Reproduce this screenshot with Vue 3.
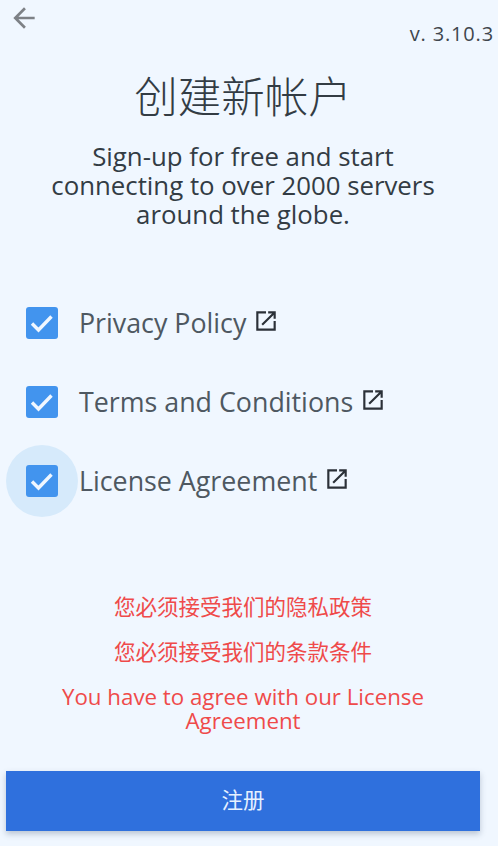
<template>
  <div class="signup">
    <div class="top-bar">
      <button class="back" aria-label="Back">
        <svg width="32" height="32" viewBox="0 0 24 24"><path d="M20 11H7.83l5.59-5.59L12 4l-8 8 8 8 1.41-1.41L7.83 13H20z" /></svg>
      </button>
      <span class="version">v. 3.10.3</span>
    </div>

    <h1 class="title">创建新帐户</h1>
    <p class="subtitle">
      <span>Sign-up for free and start</span>
      <span>connecting to over 2000 servers</span>
      <span>around the globe.</span>
    </p>

    <div class="checks">
      <label v-for="item in items" :key="item.label" class="check-row">
        <span class="box-wrap" :class="{ focused: item.focused }">
          <span class="box">
            <svg width="32" height="32" viewBox="0 0 32 32"><path d="M6 16.5l6.5 6.5 13-13.5" /></svg>
          </span>
        </span>
        <span class="check-label">{{ item.label }}</span>
        <svg class="ext" width="26" height="26" viewBox="0 0 24 24"><path d="M19 19H5V5h7V3H3v18h18v-9h-2v7zM14 3v2h3.59l-9.83 9.83 1.41 1.41L19 6.41V10h2V3h-7z" /></svg>
      </label>
    </div>

    <div class="errors">
      <p v-for="err in errors" :key="err.text" :class="{ latin: err.latin }">{{ err.text }}</p>
    </div>

    <button class="submit">注册</button>
  </div>
</template>

<script setup>
const items = [
  { label: 'Privacy Policy' },
  { label: 'Terms and Conditions' },
  { label: 'License Agreement', focused: true }
]

const errors = [
  { text: '您必须接受我们的隐私政策' },
  { text: '您必须接受我们的条款条件' },
  { text: 'You have to agree with our License Agreement', latin: true }
]
</script>

<style>
html, body {
  margin: 0;
  background: #f0f7ff;
}
</style>

<style scoped>
.signup {
  box-sizing: border-box;
  height: 846px;
  width: 498px;
  display: flex;
  flex-direction: column;
  padding: 0 18px 15px 6px;
  background: #f0f7ff;
  font-family: "Open Sans", "Noto Sans CJK SC", sans-serif;
  color: #3c4650;
  overflow: hidden;
}

.top-bar {
  display: flex;
  justify-content: space-between;
  height: 54px;
  margin-right: -14px;
}

.back {
  width: 38px;
  height: 36px;
  padding: 2px 0 0 2px;
  border: 0;
  background: none;
  text-align: left;
}

.back svg path {
  fill: #7d8186;
}

.version {
  margin-top: 21px;
  font-size: 20px;
  line-height: 26px;
  letter-spacing: 0.85px;
  color: #3f464d;
}

.title {
  margin: 15px 0 0;
  font-size: 43.5px;
  line-height: 56px;
  font-weight: 300;
  text-align: center;
  color: #333c44;
}

.subtitle {
  margin: 17px 0 0;
  display: flex;
  flex-direction: column;
  font-size: 25.8px;
  line-height: 29px;
  text-align: center;
  color: #333c44;
}

.checks {
  margin-top: 58px;
  display: flex;
  flex-direction: column;
  gap: 7px;
  padding-left: 20px;
}

.check-row {
  display: flex;
  align-items: center;
  height: 72px;
}

.box-wrap {
  position: relative;
  display: block;
  width: 32px;
  height: 32px;
  margin-right: 21px;
}

.box-wrap.focused::before {
  content: "";
  position: absolute;
  left: -20px;
  top: -20px;
  width: 72px;
  height: 72px;
  border-radius: 50%;
  background: #d6eafb;
}

.box {
  position: relative;
  display: block;
  width: 32px;
  height: 32px;
  border-radius: 3px;
  background: #4294ee;
}

.box svg {
  display: block;
}

.box svg path {
  fill: none;
  stroke: #f0f7ff;
  stroke-width: 3.4;
}

.check-label {
  font-size: 26.8px;
  line-height: 34px;
  color: #4e5861;
}

.ext {
  margin: -4px 0 0 7px;
}

.ext path {
  fill: #2b3138;
}

.errors {
  margin-top: 78px;
  text-align: center;
  color: #ef4a4a;
  font-size: 21.5px;
  line-height: 24px;
}

.errors p {
  margin: 0 10px 21px;
}

.errors p.latin {
  font-size: 22.3px;
}

.submit {
  margin-top: auto;
  height: 60px;
  padding: 0 0 6px;
  border: 0;
  background: #2f70dd;
  color: #e6f1ff;
  font-family: "Noto Sans CJK SC", sans-serif;
  font-size: 21.5px;
  box-shadow: 0 3px 6px rgba(60, 80, 110, 0.3);
}
</style>
